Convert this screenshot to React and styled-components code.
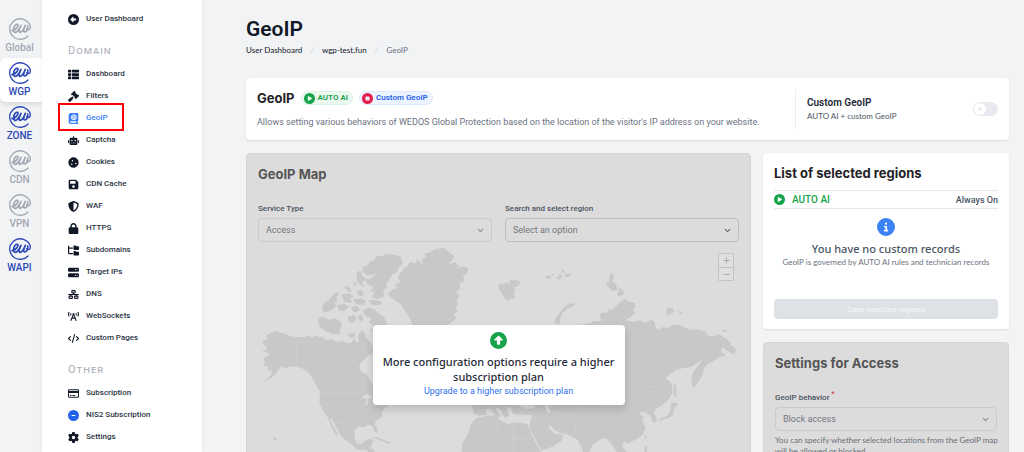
import React, { useState } from "react";
import styled, { createGlobalStyle, css } from "styled-components";
import {
  FaBookAtlas,
  FaCircleInfo,
  FaCircleLeft,
  FaCircleMinus,
  FaCirclePlay,
  FaCircleStop,
  FaCircleUp,
  FaCode,
  FaCookie,
  FaFloppyDisk,
  FaFolderTree,
  FaGavel,
  FaGear,
  FaLock,
  FaNetworkWired,
  FaRegCreditCard,
  FaRobot,
  FaServer,
  FaShieldHalved,
} from "react-icons/fa6";
import { FaBroadcastTower, FaThList } from "react-icons/fa";
import { ChevronDown, Minus, Plus, X } from "lucide-react";

const smallText = css`
  font-family: Lato, "Noto Sans", sans-serif;
  font-size: 8px;
`;

const GlobalStyle = createGlobalStyle`
  * {
    box-sizing: border-box;
  }

  body {
    margin: 0;
    overflow: hidden;
    background: #f2f3f5;
    color: #1f2937;
    font-family: Roboto, "Noto Sans", sans-serif;
    font-size: 8px;
    line-height: 12px;
  }

  button, select, input {
    font-family: inherit;
    margin: 0;
  }

  a {
    color: inherit;
    text-decoration: none;
  }

  h1, h2, h3, p {
    margin: 0;
  }
`;

const Layout = styled.div`
  display: flex;
  height: 100vh;
  overflow: hidden;
`;

const Rail = styled.nav`
  width: 42px;
  flex-shrink: 0;
  padding-top: 14px;
`;

const RailLink = styled.a`
  display: flex;
  flex-direction: column;
  align-items: center;
  height: 44px;
  padding: 4px 3px 0 0;
  font-size: 10px;
  line-height: 15px;
  font-weight: 500;
  color: ${({ $active }) => ($active ? "#2b48b5" : "#a3a8b3")};
  ${({ $current }) =>
    $current &&
    css`
      background: #fff;
      border-radius: 6px 0 0 6px;
      box-shadow: 0 2px 5px rgba(0, 0, 0, 0.12);
    `}

  svg {
    width: 22px;
    height: 22px;
    flex-shrink: 0;
  }
`;

const Sidebar = styled.aside`
  position: relative;
  width: 160px;
  flex-shrink: 0;
  padding: 8px 26px 0;
  background: #fff;
  box-shadow: 0 0 3px rgba(0, 0, 0, 0.08);
`;

const MenuTitle = styled.h3`
  margin-top: 13px;
  font-size: 11px;
  line-height: 16px;
  font-weight: 400;
  font-variant: small-caps;
  letter-spacing: 1px;
  color: #a9afba;
`;

const MenuList = styled.ul`
  list-style: none;
  margin: 0;
  padding: ${({ $spaced }) => ($spaced ? "4px 0 0" : "0")};
`;

const MenuLink = styled.a`
  display: flex;
  align-items: center;
  gap: 7px;
  height: 22px;
  font-weight: 500;
  white-space: nowrap;
  color: ${({ $current }) => ($current ? "#3b82f6" : "#2b3443")};

  svg {
    width: 11px;
    height: 11px;
    flex-shrink: 0;
    color: ${({ $current, $tint }) => $tint || ($current ? "#3b82f6" : "#111827")};
  }
`;

const Highlight = styled.span`
  position: absolute;
  left: 16px;
  top: 103px;
  width: 66px;
  height: 28px;
  border: 2px solid #fb0007;
  pointer-events: none;
`;

const Main = styled.main`
  flex: 1;
  min-width: 0;
  padding: 16px 15px 0 44px;
`;

const PageTitle = styled.h1`
  font-size: 21px;
  line-height: 26px;
  font-weight: 600;
  color: #111827;
`;

const Breadcrumb = styled.nav`
  display: flex;
  gap: 8px;
  margin-top: 2px;
  color: #111827;
  ${smallText}

  i {
    color: #c9cdd4;
    font-style: normal;
  }

  span {
    color: #6b7280;
  }
`;

const Card = styled.section`
  background: #fff;
  border-radius: 4px;
  box-shadow: 0 1px 2px rgba(0, 0, 0, 0.1);
`;

const IntroCard = styled(Card)`
  display: flex;
  align-items: stretch;
  justify-content: space-between;
  min-height: 62px;
  margin-top: 22px;
  padding: 11px;
`;

const IntroHead = styled.div`
  display: flex;
  align-items: center;
  gap: 6px;
  height: 18px;
`;

const CardTitle = styled.h2`
  font-family: Inter, sans-serif;
  font-size: 13px;
  line-height: 18px;
  font-weight: 700;
  white-space: nowrap;
  color: ${({ $muted }) => ($muted ? "#555" : "#1f2227")};
`;

const Badge = styled.span`
  display: inline-flex;
  align-items: center;
  gap: 3px;
  height: 14px;
  padding: 0 4px 0 2px;
  border-radius: 7px;
  font-weight: 600;
  color: ${({ $green }) => ($green ? "#16a34a" : "#2563eb")};
  background: ${({ $green }) => ($green ? "#ecf9f0" : "#edf4ff")};
  border: 1px solid ${({ $green }) => ($green ? "#dcf3e4" : "#dbe9fe")};

  svg {
    width: 11px;
    height: 11px;
    color: ${({ $green }) => ($green ? "#16a34a" : "#e11d48")};
  }
`;

const IntroText = styled.p`
  margin-top: 9px;
  font-size: 9px;
  color: #6b7280;
`;

const IntroSide = styled.div`
  display: flex;
  align-items: center;
  justify-content: space-between;
  width: 203px;
  flex-shrink: 0;
  padding-left: 11px;
  border-left: 1px solid #eceef1;
`;

const SideLabel = styled.label`
  color: #4b5563;
  ${smallText}

  strong {
    display: block;
    font-family: Roboto, "Noto Sans", sans-serif;
    font-size: 10px;
    line-height: 14px;
    font-weight: 600;
    color: #1f2937;
  }
`;

const Switch = styled.span`
  position: relative;
  display: inline-flex;

  input {
    appearance: none;
    width: 25px;
    height: 14px;
    border-radius: 7px;
    background: #e9eaef;
  }

  span {
    position: absolute;
    top: 1px;
    left: ${({ $on }) => ($on ? "12px" : "1px")};
    display: grid;
    place-items: center;
    width: 12px;
    height: 12px;
    border-radius: 50%;
    background: #fff;
    color: #b6bac2;
    pointer-events: none;
  }
`;

const Columns = styled.div`
  display: grid;
  grid-template-columns: minmax(0, 1fr) 246px;
  gap: 12px;
  align-items: start;
  margin-top: 13px;
`;

const SideColumn = styled.div`
  display: grid;
  gap: 13px;
`;

const LockedPanel = styled.section`
  position: relative;
  background: #dcdcdc;
  border: 1px solid #d5d6d8;
  border-radius: 4px;
  padding: 11px;
  overflow: hidden;
`;

const Fields = styled.div`
  display: grid;
  grid-template-columns: repeat(${({ $columns = 1 }) => $columns}, minmax(0, 1fr));
  gap: 13px;
  margin-top: 20px;
`;

const Field = styled.div`
  label {
    display: block;
    margin-bottom: 3px;
    font-weight: 500;
    color: #4b5260;
  }

  sup {
    margin-left: 2px;
    line-height: 0;
    color: #d33;
  }
`;

const SelectBox = styled.div`
  position: relative;

  select {
    display: block;
    appearance: none;
    width: 100%;
    height: 24px;
    padding: 0 7px;
    border: 1px solid ${({ $strong }) => ($strong ? "#bcbfc6" : "#c9cacd")};
    border-radius: 4px;
    background: transparent;
    font-size: 9px;
    color: #73777f;
  }

  svg {
    position: absolute;
    right: 7px;
    top: 8px;
    color: ${({ $strong }) => ($strong ? "#666b75" : "#8b8f96")};
    pointer-events: none;
  }
`;

const MapArea = styled.div`
  position: relative;
  height: 330px;
  margin: 3px -11px -11px;

  > svg {
    display: block;
    width: 100%;
  }
`;

const ZoomControl = styled.div`
  position: absolute;
  top: 8px;
  right: 16px;
  display: grid;
  border: 1px solid #c4c4c4;
  border-radius: 1px;

  button {
    display: grid;
    place-items: center;
    width: 14px;
    height: 13px;
    padding: 0;
    border: 0;
    background: #dfdfdf;
    color: #999;
  }

  button + button {
    border-top: 1px solid #c4c4c4;
  }
`;

const UpgradeLayer = styled.div`
  position: absolute;
  inset: 0;
  display: grid;
  place-items: center;
`;

const UpgradeBox = styled.div`
  display: flex;
  flex-direction: column;
  align-items: center;
  width: 252px;
  padding: 7px 10px;
  border-radius: 4px;
  background: #fff;
  box-shadow: 0 4px 9px rgba(0, 0, 0, 0.16);
  text-align: center;

  svg {
    width: 17px;
    height: 17px;
    color: #16a34a;
  }

  p {
    margin-top: 5px;
    font-family: "Noto Sans", sans-serif;
    font-size: 11px;
    line-height: 15px;
    font-weight: 500;
    color: #1f2937;
  }

  a {
    font-size: 9px;
    line-height: 14px;
    color: #2f6fed;
  }
`;

const RegionsCard = styled(Card)`
  padding: 11px 11px 10px;
`;

const RegionRow = styled.div`
  display: flex;
  align-items: center;
  gap: 7px;
  height: 19px;
  margin-top: 8px;
  border-top: 1px solid #e8e9ec;
  border-bottom: 1px solid #e8e9ec;
  font-size: 10px;
  font-weight: 500;
  color: #16a34a;

  svg {
    width: 11px;
    height: 11px;
  }

  span {
    margin-left: auto;
    font-size: 9px;
    color: #4b5563;
  }
`;

const Empty = styled.div`
  display: flex;
  flex-direction: column;
  align-items: center;
  padding: 9px 0 31px;
  color: #6b7280;
  ${smallText}

  svg {
    width: 18px;
    height: 18px;
    color: #3b82f6;
  }

  strong {
    margin-top: 5px;
    font-family: "Noto Sans", sans-serif;
    font-size: 11px;
    line-height: 15px;
    font-weight: 500;
    color: #4b5563;
  }
`;

const SaveButton = styled.button`
  display: block;
  width: 100%;
  height: 20px;
  border: 0;
  border-radius: 4px;
  background: #dee1e5;
  color: #f6f7f9;
  font-size: 8px;
`;

const Hint = styled.p`
  margin: 4px -8px 0 0;
  line-height: 11px;
  color: #6a6e76;
  ${smallText}
`;

const rail = [
  { label: "Global" },
  { label: "WGP", active: true, current: true },
  { label: "ZONE", active: true },
  { label: "CDN" },
  { label: "VPN" },
  { label: "WAPI", active: true },
];

const domainMenu = [
  { label: "Dashboard", icon: FaThList },
  { label: "Filters", icon: FaGavel },
  { label: "GeoIP", icon: FaBookAtlas, current: true },
  { label: "Captcha", icon: FaRobot },
  { label: "Cookies", icon: FaCookie },
  { label: "CDN Cache", icon: FaFloppyDisk },
  { label: "WAF", icon: FaShieldHalved },
  { label: "HTTPS", icon: FaLock },
  { label: "Subdomains", icon: FaFolderTree },
  { label: "Target IPs", icon: FaServer },
  { label: "DNS", icon: FaNetworkWired },
  { label: "WebSockets", icon: FaBroadcastTower },
  { label: "Custom Pages", icon: FaCode },
];

const otherMenu = [
  { label: "Subscription", icon: FaRegCreditCard },
  { label: "NIS2 Subscription", icon: FaCircleMinus, tint: "#2563eb" },
  { label: "Settings", icon: FaGear },
];

const Logo = () => (
  <svg viewBox="0 0 66 66" fill="none" stroke="currentColor" strokeLinecap="round" strokeLinejoin="round">
    <path strokeWidth="4" d="M57 54C48 64 31 67 18 60C4 52-1 35 4 22C11 6 29-1 44 4C56 9 64 19 64 28C64 34 58 37 53 32" />
    <path
      strokeWidth="5"
      d="M9 38C17 37 27 29 27 22C26 16 18 19 15 28C12 37 14 44 20 43C27 41 32 31 36 22C31 32 28 42 33 43C39 43 45 32 49 22C44 32 42 42 47 42C53 42 58 33 56 24"
    />
  </svg>
);

const WorldMap = () => (
  <svg viewBox="18 285 1515 1002" aria-hidden="true">
    <g fill="#c8c8c8">
      {/* North America */}
      <path d="M62 602L80 598L66 580L64 574L82 568L76 558L90 549L106 543L118 549L130 551L148 560L166 562L190 563L200 558L215 562L222 556L234 562L244 562L258 572L276 568L288 578L304 574L322 581L334 578L340 564L348 580L356 574L352 558L364 540L372 550L378 566L388 576L396 590L400 612L384 616L372 628L360 640L356 654L364 668L380 674L390 696L398 708L408 700L404 670L416 640L440 642L462 662L480 690L482 710L466 724L448 740L446 768L432 776L424 790L426 800L408 814L402 824L412 844L409 852L402 846L396 830L382 826L372 834L352 832L342 844L342 866L350 884L366 884L374 874L390 868L398 872L394 888L386 896L400 900L404 924L390 912L376 904L352 902L330 884L312 870L300 858L290 838L270 804L268 812L284 842L294 860L284 854L272 832L262 806L246 782L236 760L238 728L230 714L218 692L204 670L184 656L166 652L148 650L134 656L122 650L112 662L104 674L86 688L60 704L90 678L94 664L82 662L80 648L68 650L72 636L66 626L84 618L82 610Z" />
      {/* Arctic islands */}
      <path d="M366 352L384 344L388 334L402 330L408 318L424 318L440 312L460 314L480 320L488 342L474 352L470 366L456 374L446 390L436 400L440 412L428 424L432 440L412 448L394 442L404 428L388 424L400 412L382 404L372 390L390 386L408 372L380 376L366 364Z" />
      <path d="M350 366L360 362L366 378L378 388L366 396L370 414L358 404L348 392Z" />
      <path d="M310 412L320 408L334 424L326 428ZM338 394L348 400L342 410ZM270 444L284 428L296 430L286 444L292 454L276 460L262 452ZM302 434L326 430L340 440L328 448L336 460L310 456ZM346 426L362 420L372 434L356 440Z" />
      <path d="M244 472L256 452L276 460L288 462L280 476L262 486L248 488ZM290 466L312 462L326 472L310 484L294 480ZM338 448L360 446L378 452L368 466L344 462ZM330 472L350 468L358 482L340 488Z" />
      <path d="M234 504L248 500L262 510L280 506L296 512L304 526L296 544L302 552L276 554L254 544L240 534L232 520Z" />
      <path d="M322 500L340 496L348 508L336 520L324 516ZM352 498L364 494L368 510L358 516ZM320 554L342 548L344 560L330 566Z" />
      <path d="M366 484L382 474L400 478L414 490L430 500L440 524L448 546L436 558L418 556L402 542L386 548L400 530L386 518L392 506L376 500Z" />
      <path d="M382 452L404 450L426 456L420 466L396 466Z" />
      {/* Greenland */}
      <path d="M442 434L452 422L472 414L462 404L482 398L472 384L480 370L492 354L504 346L508 336L524 340L532 328L548 346L544 330L558 320L552 312L572 306L586 296L612 294L626 306L642 318L636 332L622 344L646 338L656 350L640 360L668 350L684 354L682 368L668 378L674 392L658 400L660 416L648 426L658 440L648 452L654 462L644 476L656 482L640 494L650 506L630 520L600 540L580 560L560 576L544 560L524 540L510 510L496 486L482 464L462 450Z" />
      {/* Svalbard, Franz Josef Land, Severnaya Zemlya */}
      <path d="M776 402L792 404L800 396L812 406L826 416L822 430L826 448L812 446L802 454L792 444L784 428L776 416ZM806 396L816 388L840 394L838 406L824 412L812 406Z" />
      <path d="M916 378L928 376L936 384L922 388ZM934 374L942 372L940 380ZM948 384L962 374L970 380L958 390ZM964 360L974 362L972 372ZM956 372L964 370L962 378ZM974 374L994 370L990 380L978 382Z" />
      <path d="M1098 402L1110 396L1108 382L1118 368L1124 382L1118 394L1130 404L1134 420L1120 424L1108 414ZM1134 436L1140 412L1150 422L1154 432L1138 440Z" />
      <path d="M944 520L950 500L962 488L974 472L990 462L1006 460L1004 468L984 476L968 490L962 504L960 522Z" />
      <path d="M1280 488L1284 474L1300 476L1306 486L1296 490L1286 498ZM1312 482L1332 490L1326 494ZM1448 542L1462 540L1464 546L1450 546Z" />
      {/* Eurasia */}
      <path d="M728 700L760 640L820 560L900 545L1000 530L1056 520L1060 514L1086 514L1080 496L1088 488L1102 490L1106 480L1122 476L1134 464L1150 450L1158 446L1164 454L1186 460L1188 474L1180 480L1188 490L1174 502L1158 512L1180 516L1204 512L1216 520L1236 510L1246 518L1248 532L1258 540L1270 532L1286 534L1300 526L1320 526L1340 536L1356 540L1380 540L1400 546L1406 558L1424 560L1438 554L1454 562L1468 572L1478 588L1492 600L1484 614L1462 602L1450 592L1446 606L1460 618L1440 622L1420 636L1404 644L1394 660L1388 680L1374 702L1362 714L1356 690L1360 670L1376 650L1388 632L1370 642L1358 652L1330 656L1312 660L1290 676L1278 686L1290 694L1298 706L1300 730L1286 752L1268 768L1250 778L1244 790L1252 806L1250 820L1238 818L1234 800L1222 792L1208 786L1200 794L1214 804L1208 812L1218 836L1212 854L1196 868L1178 876L1164 884L1152 876L1148 892L1164 912L1160 934L1140 920L1126 900L1112 880L1098 866L1082 870L1060 886L1048 908L1036 920L1024 892L1014 872L1000 864L984 856L962 852L944 842L930 826L926 836L944 852L970 858L966 874L940 892L904 904L894 884L868 836L872 814L876 796L846 796L820 794L812 772L800 776L808 800L794 806L780 780L764 772L782 800L772 806L750 778L738 780L740 796L716 800L700 792L696 768Z" />
      {/* Africa */}
      <path d="M710 806L740 800L770 798L778 812L806 826L820 818L862 824L872 850L898 900L910 918L960 912L940 980L660 980L664 920L666 884L686 850L692 824Z" />
      <path d="M1302 698L1310 708L1312 738L1304 744ZM1296 760L1316 762L1312 770L1302 780L1302 796L1288 806L1266 812L1258 818L1262 808L1286 798L1294 778ZM1218 854L1222 862L1216 872ZM1216 890L1224 896L1222 912L1214 906Z" />
      <path d="M390 862L410 864L434 874L458 882L444 884L420 874ZM94 862L104 864L110 874L102 874Z" />
    </g>
    {/* inland water */}
    <g fill="#dcdcdc">
      <path d="M364 744L374 734L388 736L396 746L384 748L380 770L374 764L378 748ZM394 750L410 756L402 764Z" />
      <path d="M836 768L852 760L870 766L888 770L880 778L850 778ZM912 762L924 756L934 762L926 772L934 790L922 790L916 776Z" />
    </g>
    {/* borders */}
    <g fill="none" stroke="#d1d1d1" strokeWidth="2">
      <path d="M168 562V652M238 730H362M282 820L306 822L334 844M700 848L746 890L790 850L808 870H872M820 824V910M766 800L772 842M958 764L1010 752L1050 738L1080 724L1120 736L1164 728L1200 742L1212 714L1250 710L1276 754M1010 752L1022 790L1060 820L1100 836L1120 856M948 790L990 800L1010 822L1000 862M876 800L914 826M1050 738L1100 772L1160 764" />
      <path d="M1310 758L1370 712" />
    </g>
  </svg>
);

const Menu = ({ items, spaced }) => (
  <MenuList $spaced={spaced}>
    {items.map(({ label, icon: Icon, current, tint }) => (
      <li key={label}>
        <MenuLink href="#" $current={current} $tint={tint}>
          <Icon />
          {label}
        </MenuLink>
      </li>
    ))}
  </MenuList>
);

const SelectField = ({ id, label, value, strong, required }) => (
  <Field>
    <label htmlFor={id}>
      {label}
      {required && <sup>*</sup>}
    </label>
    <SelectBox $strong={strong}>
      <select id={id} defaultValue={value}>
        <option>{value}</option>
      </select>
      <ChevronDown size={9} strokeWidth={3} />
    </SelectBox>
  </Field>
);

function App() {
  const [custom, setCustom] = useState(false);

  return (
    <>
      <GlobalStyle />
      <Layout>
        <Rail>
          {rail.map((item) => (
            <RailLink key={item.label} href="#" $active={item.active} $current={item.current}>
              <Logo />
              {item.label}
            </RailLink>
          ))}
        </Rail>

        <Sidebar>
          <Menu items={[{ label: "User Dashboard", icon: FaCircleLeft }]} />
          <MenuTitle>Domain</MenuTitle>
          <Menu items={domainMenu} spaced />
          <MenuTitle>Other</MenuTitle>
          <Menu items={otherMenu} spaced />
          <Highlight />
        </Sidebar>

        <Main>
          <PageTitle>GeoIP</PageTitle>
          <Breadcrumb>
            <a href="#">User Dashboard</a>
            <i>/</i>
            <a href="#">wgp-test.fun</a>
            <i>/</i>
            <span>GeoIP</span>
          </Breadcrumb>

          <IntroCard>
            <div>
              <IntroHead>
                <CardTitle>GeoIP</CardTitle>
                <Badge $green>
                  <FaCirclePlay />
                  AUTO AI
                </Badge>
                <Badge>
                  <FaCircleStop />
                  Custom GeoIP
                </Badge>
              </IntroHead>
              <IntroText>
                Allows setting various behaviors of WEDOS Global Protection based on the location of the visitor's IP
                address on your website.
              </IntroText>
            </div>
            <IntroSide>
              <SideLabel htmlFor="custom-geoip">
                <strong>Custom GeoIP</strong>
                AUTO AI + custom GeoIP
              </SideLabel>
              <Switch $on={custom}>
                <input
                  id="custom-geoip"
                  type="checkbox"
                  checked={custom}
                  onChange={(e) => setCustom(e.target.checked)}
                />
                <span>
                  <X size={6} />
                </span>
              </Switch>
            </IntroSide>
          </IntroCard>

          <Columns>
            <LockedPanel>
              <CardTitle $muted>GeoIP Map</CardTitle>
              <Fields $columns={2}>
                <SelectField id="service" label="Service Type" value="Access" />
                <SelectField id="region" label="Search and select region" value="Select an option" strong />
              </Fields>
              <MapArea>
                <WorldMap />
                <ZoomControl>
                  <button type="button" aria-label="Zoom in">
                    <Plus size={9} />
                  </button>
                  <button type="button" aria-label="Zoom out">
                    <Minus size={9} />
                  </button>
                </ZoomControl>
              </MapArea>
              <UpgradeLayer>
                <UpgradeBox>
                  <FaCircleUp />
                  <p>More configuration options require a higher subscription plan</p>
                  <a href="#">Upgrade to a higher subscription plan</a>
                </UpgradeBox>
              </UpgradeLayer>
            </LockedPanel>

            <SideColumn>
              <RegionsCard>
                <CardTitle>List of selected regions</CardTitle>
                <RegionRow>
                  <FaCirclePlay />
                  AUTO AI
                  <span>Always On</span>
                </RegionRow>
                <Empty>
                  <FaCircleInfo />
                  <strong>You have no custom records</strong>
                  GeoIP is governed by AUTO AI rules and technician records
                </Empty>
                <SaveButton type="button">Save selected regions</SaveButton>
              </RegionsCard>

              <LockedPanel>
                <CardTitle $muted>Settings for Access</CardTitle>
                <Fields>
                  <SelectField id="behavior" label="GeoIP behavior" value="Block access" required />
                </Fields>
                <Hint>You can specify whether selected locations from the GeoIP map will be allowed or blocked.</Hint>
              </LockedPanel>
            </SideColumn>
          </Columns>
        </Main>
      </Layout>
    </>
  );
}

export default App;
